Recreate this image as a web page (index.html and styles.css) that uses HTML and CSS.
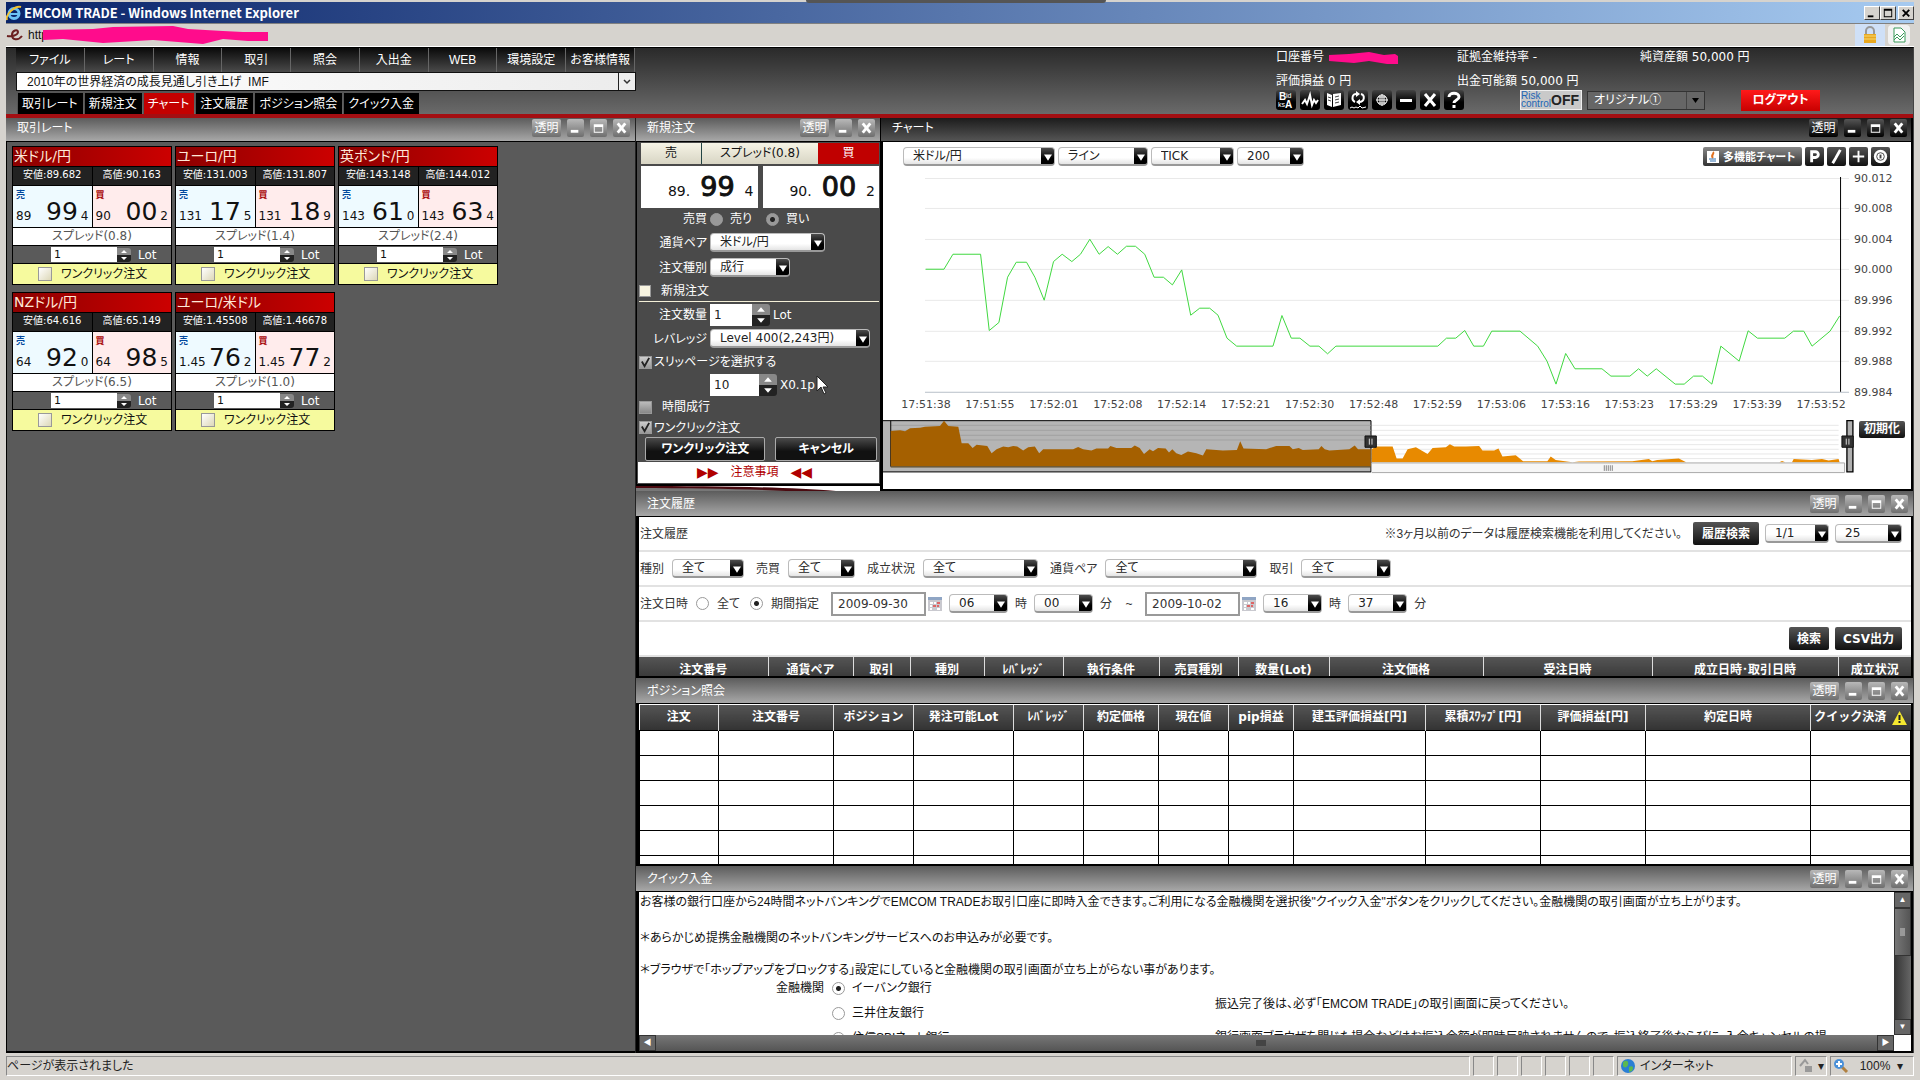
FILE: index.html
```html
<!DOCTYPE html>
<html lang="ja">
<head>
    <meta charset="UTF-8">
    <meta name="viewport" content="width=device-width, initial-scale=1.0">
    <title>EMCOM TRADE</title>
    <link rel="stylesheet" href="styles.css">
</head>
<body>

    <svg class="defs" aria-hidden="true">
        <symbol id="i-min" viewBox="0 0 18 18"><path d="M4 11h8v3H4z" fill="#fff"/></symbol>
        <symbol id="i-max" viewBox="0 0 18 18"><path d="M4 5h10v9H4zM5 8v5h8V8z" fill="#fff" fill-rule="evenodd"/></symbol>
        <symbol id="i-close" viewBox="0 0 18 18"><path d="M5 4l8 10M13 4L5 14" stroke="#fff" stroke-width="3"/></symbol>
        <symbol id="i-cal" viewBox="0 0 14 16"><path d="M0 1h14v14H0z" fill="#c9c9cf"/><path d="M0 1h14v3H0z" fill="#8fa5c4"/><path d="M2 6h3v2H2zM6 6h2v2H6zM2 9h2v2H2zM2 12h2v2H2zM9 12h3v2H9z" fill="#fff"/><path d="M9 6h3v2H9zM5 9h3v2H5zM9 9h2v2H9z" fill="#d66"/></symbol>
    </svg>

    <div class="titlebar">
        <svg class="ie" viewBox="0 0 16 16"><circle cx="8" cy="8.500" r="5" fill="none" stroke="#6cc3f5" stroke-width="3"/><path d="M4 9h9" stroke="#6cc3f5" stroke-width="2"/><path d="M1 15C-1 10 9 0 15 2" fill="none" stroke="#f2c230" stroke-width="2"/></svg>
        <span class="title-text">EMCOM TRADE - Windows Internet Explorer</span>
        <span class="shade"></span>
        <button class="xp" aria-label="最小化"><svg viewBox="0 0 15 14"><path d="M3 9h6v2H3z"/></svg></button>
        <button class="xp" aria-label="最大化"><svg viewBox="0 0 15 14"><path d="M3 2h9v9H3zM4 4v6h7V4z" fill-rule="evenodd"/></svg></button>
        <button class="xp xp-close" aria-label="閉じる"><svg viewBox="0 0 15 14"><path d="M4 3l7 7M11 3l-7 7" stroke="#000" stroke-width="2"/></svg></button>
    </div>
    <div class="address">
        <svg class="favicon" viewBox="0 0 18 16"><path d="M1 9c5 1 11-1 11-4 0-3-6-2-6 3 0 5 6 6 10 1" fill="none" stroke="#6b2020" stroke-width="2"/></svg>
        <span>http</span>
        <svg class="blob" viewBox="0 0 226 18"><path d="M0 4L50 3 70 1 130 0 145 3 180 5 200 6 225 6V15H205L180 13 160 18 110 14 60 17 20 13 0 14z" fill="#ff0c8c"/></svg>
        <span class="lock"><svg viewBox="0 0 16 18"><path d="M4 8V5a4 4 0 018 0v3" fill="none" stroke="#999" stroke-width="2"/><path d="M2 8h12v9H2z" fill="#e8a820"/><path d="M2 10h12M2 13h12" stroke="#f8d870"/></svg></span>
        <span class="cert"><svg viewBox="0 0 16 18"><path d="M3 2h7l4 4v10H3z" fill="#fff" stroke="#3a9a5a"/><path d="M3 11l3-3 3 3 4-4M3 14l3-3 3 3 4-4" fill="none" stroke="#3a9a5a"/></svg></span>
    </div>

    <div class="app">
        <header class="top">
            <div class="top-left">
                <nav class="menu">
                    <button>ファイル</button><button>レート</button><button>情報</button><button>取引</button><button>照会</button><button>入出金</button><button>WEB</button><button>環境設定</button><button>お客様情報</button>
                </nav>
                <select class="news" aria-label="ニュース"><option>2010年の世界経済の成長見通し引き上げ&nbsp; IMF</option></select>
                <nav class="tabs">
                    <button>取引レート</button><button>新規注文</button><button class="active">チャート</button><button>注文履歴</button><button>ポジション照会</button><button>クイック入金</button>
                </nav>
            </div>
            <div class="top-right">
                <div class="account">
                    <span>口座番号 <svg class="mask" viewBox="0 0 70 14"><path d="M0 5L20 4 40 2 55 5 66 4 69 6V14H58L40 11 25 13 0 11z" fill="#ff0c8c"/></svg></span>
                    <span>証拠金維持率 -</span>
                    <span>純資産額 50,000 円</span>
                    <span>評価損益 0 円</span>
                    <span>出金可能額 50,000 円</span>
                </div>
                <div class="tools">
                    <div class="icons">
                        <button aria-label="Bid Ask"><svg viewBox="0 0 20 20"><text x="3" y="10" class="t9">B</text><text x="10" y="8" class="t5">id</text><text x="2" y="17" class="t5">ks</text><text x="9" y="18" class="t9">A</text></svg></button>
                        <button aria-label="チャート"><svg viewBox="0 0 20 20"><path d="M2 14l3-4 2 4 3-9 2 10 2-5 2 3 2-3" class="ln2"/></svg></button>
                        <button aria-label="ニュース"><svg viewBox="0 0 20 20"><path d="M3 3l5 2v12l-5-2zM9 4l8-1v12l-8 2z" fill="#fff"/><path d="M4 7l3 1M4 10l3 1M11 7l4-1M11 10l4-1M11 13l4-1" stroke="#444"/></svg></button>
                        <button aria-label="更新"><svg viewBox="0 0 20 20"><path d="M9 4C4 3 3 10 7 12M11 12c6 0 6-7 2-8" class="ln2"/><path d="M8 1l4 3-4 3zM12 9l-4 3 4 3z" fill="#fff"/><path d="M2 18l2-1 2 1 2-1 2 1 2-2 2 2 4-1" class="ln"/></svg></button>
                        <button aria-label="世界"><svg viewBox="0 0 20 20"><circle cx="10" cy="10" r="5" class="ln"/><path d="M4 10h12M10 4v12M6 7h8M6 13h8M8 6v8M12 6v8" class="ln"/></svg></button>
                        <button aria-label="最小化"><svg viewBox="0 0 20 20"><path d="M4 9h12v3H4z" fill="#fff"/></svg></button>
                        <button aria-label="閉じる"><svg viewBox="0 0 20 20"><path d="M5 4l10 12M15 4L5 16" stroke="#fff" stroke-width="3"/></svg></button>
                        <button aria-label="ヘルプ"><svg viewBox="0 0 20 20"><path d="M5 7c0-5 10-5 10 0 0 3-5 3-5 6M10 15v3" fill="none" stroke="#fff" stroke-width="3"/></svg></button>
                    </div>
                    <button class="risk"><span>Risk<br>control</span><b>OFF</b></button>
                    <select class="layout-sel" aria-label="レイアウト"><option>オリジナル①</option></select>
                    <button class="logout">ログアウト</button>
                </div>
            </div>
        </header>

        <main class="work">
            <section class="panel rates">
                <div class="bar"><h2>取引レート</h2><button class="clear">透明</button><button aria-label="最小化"><svg><use href="#i-min"/></svg></button><button aria-label="最大化"><svg><use href="#i-max"/></svg></button><button aria-label="閉じる"><svg><use href="#i-close"/></svg></button></div>
                <div class="cards">
                    <article class="card">
                        <h3>米ドル/円</h3>
                        <div class="pair hl"><span>安値:89.682</span><span>高値:90.163</span></div>
                        <div class="pair px"><button class="sell"><i>売</i><span>89</span><b>99</b><span>4</span></button><button class="buy"><i>買</i><span>90</span><b>00</b><span>2</span></button></div>
                        <div class="spread">スプレッド(0.8)</div>
                        <div class="lot"><input type="text" value="1" id="lot1"><span class="spin"></span><label for="lot1">Lot</label></div>
                        <label class="one"><input type="checkbox">ワンクリック注文</label>
                    </article>
                    <article class="card">
                        <h3>ユーロ/円</h3>
                        <div class="pair hl"><span>安値:131.003</span><span>高値:131.807</span></div>
                        <div class="pair px"><button class="sell"><i>売</i><span>131</span><b>17</b><span>5</span></button><button class="buy"><i>買</i><span>131</span><b>18</b><span>9</span></button></div>
                        <div class="spread">スプレッド(1.4)</div>
                        <div class="lot"><input type="text" value="1" id="lot2"><span class="spin"></span><label for="lot2">Lot</label></div>
                        <label class="one"><input type="checkbox">ワンクリック注文</label>
                    </article>
                    <article class="card">
                        <h3>英ポンド/円</h3>
                        <div class="pair hl"><span>安値:143.148</span><span>高値:144.012</span></div>
                        <div class="pair px"><button class="sell"><i>売</i><span>143</span><b>61</b><span>0</span></button><button class="buy"><i>買</i><span>143</span><b>63</b><span>4</span></button></div>
                        <div class="spread">スプレッド(2.4)</div>
                        <div class="lot"><input type="text" value="1" id="lot3"><span class="spin"></span><label for="lot3">Lot</label></div>
                        <label class="one"><input type="checkbox">ワンクリック注文</label>
                    </article>
                    <article class="card">
                        <h3>NZドル/円</h3>
                        <div class="pair hl"><span>安値:64.616</span><span>高値:65.149</span></div>
                        <div class="pair px"><button class="sell"><i>売</i><span>64</span><b>92</b><span>0</span></button><button class="buy"><i>買</i><span>64</span><b>98</b><span>5</span></button></div>
                        <div class="spread">スプレッド(6.5)</div>
                        <div class="lot"><input type="text" value="1" id="lot4"><span class="spin"></span><label for="lot4">Lot</label></div>
                        <label class="one"><input type="checkbox">ワンクリック注文</label>
                    </article>
                    <article class="card">
                        <h3>ユーロ/米ドル</h3>
                        <div class="pair hl"><span>安値:1.45508</span><span>高値:1.46678</span></div>
                        <div class="pair px"><button class="sell"><i>売</i><span>1.45</span><b>76</b><span>2</span></button><button class="buy"><i>買</i><span>1.45</span><b>77</b><span>2</span></button></div>
                        <div class="spread">スプレッド(1.0)</div>
                        <div class="lot"><input type="text" value="1" id="lot5"><span class="spin"></span><label for="lot5">Lot</label></div>
                        <label class="one"><input type="checkbox">ワンクリック注文</label>
                    </article>
                </div>
            </section>

            <div class="right">
                <div class="upper">
                    <section class="panel order">
                        <div class="bar"><h2>新規注文</h2><button class="clear">透明</button><button aria-label="最小化"><svg><use href="#i-min"/></svg></button><button aria-label="閉じる"><svg><use href="#i-close"/></svg></button></div>
                        <form class="order-body">
                            <div class="side"><span class="s1">売</span><span class="s2">スプレッド(0.8)</span><span class="s3">買</span></div>
                            <div class="big"><div><span>89.</span><b>99</b><span>4</span></div><div><span>90.</span><b>00</b><span>2</span></div></div>
                            <div class="row r-radio"><span class="lab">売買</span><label><input type="radio" name="bs">売り</label><label><input type="radio" name="bs" checked>買い</label></div>
                            <div class="row r-sel"><label class="lab" for="pair">通貨ペア</label><select id="pair" class="sel w113"><option>米ドル/円</option></select></div>
                            <div class="row r-sel"><label class="lab" for="type">注文種別</label><select id="type" class="sel w80"><option>成行</option></select></div>
                            <label class="row r-new"><input type="checkbox">新規注文</label>
                            <div class="row r-num"><label class="lab" for="qty">注文数量</label><input type="text" id="qty" class="n1" value="1"><span class="spin big-spin"></span><span>Lot</span></div>
                            <div class="row r-sel"><label class="lab" for="lev">レバレッジ</label><select id="lev" class="sel w160"><option>Level 400(2,243円)</option></select></div>
                            <label class="row r-chk"><input type="checkbox" checked>スリッページを選択する</label>
                            <div class="row r-num"><span class="lab"></span><input type="text" class="n2" value="10" aria-label="スリッページ"><span class="spin big-spin"></span><span>X0.1p</span></div>
                            <label class="row r-chk wide"><input type="checkbox">時間成行</label>
                            <label class="row r-chk low"><input type="checkbox" checked>ワンクリック注文</label>
                            <div class="acts"><button type="button" class="a1">ワンクリック注文</button><button type="button" class="a2">キャンセル</button></div>
                            <a class="notice" href="#"><span>▶▶</span>注意事項<span>◀◀</span></a>
                            <svg class="cursor" viewBox="0 0 12 20"><path d="M1 1v15l4-4 3 7 2-1-3-6h5z" fill="#fff" stroke="#222"/></svg>
                        </form>
                        <svg class="swoosh" viewBox="0 0 244 5" preserveAspectRatio="none"><path d="M0 0C80 0 150 1 200 5H0z" fill="#4a0a10"/><path d="M0 2C60 2 110 3 150 5H0z" fill="#777"/></svg>
                    </section>

                    <section class="panel chart">
                        <div class="bar dark"><h2>チャート</h2><button class="clear">透明</button><button aria-label="最小化"><svg><use href="#i-min"/></svg></button><button aria-label="最大化"><svg><use href="#i-max"/></svg></button><button aria-label="閉じる"><svg><use href="#i-close"/></svg></button></div>
                        <div class="chart-body">
                            <div class="chart-tools">
                                <select class="sel w152" aria-label="通貨ペア"><option>米ドル/円</option></select>
                                <select class="sel w89" aria-label="種類"><option>ライン</option></select>
                                <select class="sel w84" aria-label="足"><option>TICK</option></select>
                                <select class="sel w67" aria-label="本数"><option>200</option></select>
                                <button class="multi"><svg viewBox="0 0 12 12"><path d="M0 0h12v12H0z" fill="#fff"/><path d="M6 1c2 2-3 3 0 6" fill="none" stroke="#e07020" stroke-width="2"/><path d="M2 8h7M3 10h6" stroke="#3070b0"/></svg>多機能チャート</button>
                                <button class="ct" aria-label="P"><svg viewBox="0 0 20 20"><path d="M7 16V5h4a3 3 0 010 6H7" fill="none" stroke="#fff" stroke-width="3"/></svg></button>
                                <button class="ct" aria-label="線"><svg viewBox="0 0 20 20"><path d="M14 3L9 12l-3 5" fill="none" stroke="#fff" stroke-width="3"/></svg></button>
                                <button class="ct" aria-label="拡大"><svg viewBox="0 0 20 20"><path d="M10 4v12M4 10h12" stroke="#fff" stroke-width="2"/></svg></button>
                                <button class="ct" aria-label="設定"><svg viewBox="0 0 20 20"><circle cx="10" cy="10" r="7" fill="#fff"/><circle cx="10" cy="10" r="4" fill="none" stroke="#444"/><path d="M10 8v4" stroke="#444" stroke-width="2"/></svg></button>
                            </div>
                            <svg class="plot" viewBox="883 168 1029 246">
                                <path class="grid" d="M925 178.500h925M925 208.500h925M925 239.500h925M925 269.500h925M925 300.500h925M925 331.500h925M925 361.500h925"/>
                                <path d="M925 392.500h925" stroke="#b8bfc8"/>
                                <path d="M1841.500 177V392" stroke="#000"/>
                                <svg x="883" y="168" width="1029" height="246" viewBox="9 174 3087 738">
                                    <polyline class="tick" points="137,478 192,478 219,433 302,433 328,662 357,638 383,502 409,457 440,457 465,502 493,571 521,455 547,433 576,455 602,433 630,388 658,433 685,410 713,433 740,409 767,409 795,433 823,502 851,502 878,525 906,480 933,616 960,595 990,595 1015,616 1042,685 1071,709 1180,709 1207,617 1235,685 1261,685 1291,709 1318,709 1344,732 1369,709 1675,709 1701,685 1729,685 1756,662 1783,709 1812,709 1837,664 1922,664 1975,709 2003,754 2030,823 2059,731 2087,777 2168,777 2195,799 2252,799 2278,777 2304,799 2331,777 2388,823 2415,823 2443,799 2470,799 2498,823 2525,709 2580,754 2607,663 2635,685 2717,685 2743,664 2774,664 2799,709 2853,664 2882,618"/>
                                </svg>
                                <g class="axis">
                                    <text x="1855" y="182">90.012</text><text x="1855" y="212">90.008</text><text x="1855" y="243">90.004</text><text x="1855" y="273">90.000</text><text x="1855" y="304">89.996</text><text x="1855" y="335">89.992</text><text x="1855" y="365">89.988</text><text x="1855" y="396">89.984</text>
                                </g>
                                <g class="axis mid">
                                    <text x="926" y="408">17:51:38</text><text x="990" y="408">17:51:55</text><text x="1054" y="408">17:52:01</text><text x="1118" y="408">17:52:08</text><text x="1182" y="408">17:52:14</text><text x="1246" y="408">17:52:21</text><text x="1310" y="408">17:52:30</text><text x="1374" y="408">17:52:48</text><text x="1438" y="408">17:52:59</text><text x="1502" y="408">17:53:06</text><text x="1566" y="408">17:53:16</text><text x="1630" y="408">17:53:23</text><text x="1694" y="408">17:53:29</text><text x="1758" y="408">17:53:39</text><text x="1822" y="408">17:53:52</text>
                                </g>
                            </svg>
                            <div class="range">
                                <svg class="range-svg" viewBox="9 924 2920 180">
                                    <path d="M1476 946H2880M1476 961H2880M1476 976H2880M1476 990H2880M1476 1004H2880M1476 1018H2880M1476 1032H2880M1476 1046H2880" stroke="#e8e8e8" stroke-width="3"/>
                                    <path d="M3 932H1475V1086H3z" fill="#b5b5b5" stroke="#000" stroke-width="3"/>
                                    <path d="M32 946H1474M32 961H1474M32 976H1474M32 990H1474" stroke="#a2a2a2" stroke-width="3"/>
                                    <path d="M32 932V1070" stroke="#000" stroke-width="3"/>
                                    <path fill="#a56000" d="M32 1070V963L60 961 75 964 90 955 120 953 135 950 180 948 192 932 205 948 235 950 245 1000 265 1000 278 1014 290 1004 322 1008 335 1030 350 1018 370 1010 385 1012 400 1008 412 1010 430 1022 445 1012 465 1010 478 1030 490 1018 580 1018 595 1011 610 1018 635 1022 650 1016 685 1016 692 1008 710 1014 755 1014 765 1007 780 1014 793 1032 810 1018 820 1024 835 1014 858 1016 868 1028 878 1018 890 1030 905 1035 925 1025 950 1030 970 1037 980 1018 1030 1022 1072 1020 1082 994 1092 1016 1160 1018 1190 1008 1230 1008 1240 1018 1258 1014 1270 1020 1318 1018 1326 1008 1336 1018 1350 1022 1410 1018 1426 1007 1436 1018 1474 1018V1070z"/>
                                    <path d="M32 1071H1474" stroke="#5c4a28" stroke-width="4"/>
                                    <path fill="#e88a00" d="M1477 1057V1018L1490 1010 1540 1010 1552 1046 1570 1046 1585 1018 1610 1012 1645 1032 1660 1014 1700 1012 1712 1003 1725 1010 1760 1010 1800 1008 1810 1022 1845 1022 1858 1016 1870 1040 1910 1036 1932 1054 2005 1054 2015 1040 2030 1050 2080 1057 2100 1055 2260 1054 2310 1047 2320 1054 2335 1050 2400 1046 2422 1057 2702 1057 2710 1053 2720 1057 2740 1057 2745 1047 2800 1050 2830 1047 2850 1052 2880 1047 2883 1057z"/>
                                    <path d="M1477 1059H2898V1088H1477" fill="#f6f6f6" stroke="#aaa" stroke-width="3"/>
                                    <path d="M2176 1066v17M2182 1066v17M2188 1066v17M2194 1066v17M2200 1066v17" stroke="#888" stroke-width="3"/>
                                    <path d="M2905 932h18v154h-18z" fill="#b0b0b0" stroke="#000" stroke-width="4"/>
                                    <path d="M1457 978h34v34h-34zM2890 978h34v34h-34z" fill="#333" stroke="#111" stroke-width="3"/>
                                    <path d="M1470 986v18M1478 986v18M2903 986v18M2911 986v18" stroke="#ddd" stroke-width="3"/>
                                </svg>
                                <button class="reset">初期化</button>
                            </div>
                        </div>
                    </section>
                </div>

                <section class="panel history">
                    <div class="bar"><h2>注文履歴</h2><button class="clear">透明</button><button aria-label="最小化"><svg><use href="#i-min"/></svg></button><button aria-label="最大化"><svg><use href="#i-max"/></svg></button><button aria-label="閉じる"><svg><use href="#i-close"/></svg></button></div>
                    <div class="box hist-body">
                        <div class="line l1"><span>注文履歴</span><span class="push note">※3ヶ月以前のデータは履歴検索機能を利用してください。</span><button class="btn">履歴検索</button><select class="sel w64" aria-label="ページ"><option>1/1</option></select><select class="sel w67" aria-label="件数"><option>25</option></select></div>
                        <div class="line l2">
                            <label class="f"><span>種別</span><select class="sel w72"><option>全て</option></select></label>
                            <label class="f"><span>売買</span><select class="sel w67"><option>全て</option></select></label>
                            <label class="f"><span>成立状況</span><select class="sel w113"><option>全て</option></select></label>
                            <label class="f"><span>通貨ペア</span><select class="sel w152"><option>全て</option></select></label>
                            <label class="f"><span>取引</span><select class="sel w89"><option>全て</option></select></label>
                        </div>
                        <div class="line l3">
                            <span>注文日時</span><label><input type="radio" name="term">全て</label><label><input type="radio" name="term" checked>期間指定</label>
                            <input type="text" class="date" value="2009-09-30" aria-label="開始日"><svg class="cal"><use href="#i-cal"/></svg>
                            <select class="sel w59" aria-label="開始時"><option>06</option></select><span>時</span><select class="sel w59" aria-label="開始分"><option>00</option></select><span>分</span><span class="tilde">~</span>
                            <input type="text" class="date" value="2009-10-02" aria-label="終了日"><svg class="cal"><use href="#i-cal"/></svg>
                            <select class="sel w59" aria-label="終了時"><option>16</option></select><span>時</span><select class="sel w59" aria-label="終了分"><option>37</option></select><span>分</span>
                        </div>
                        <div class="line l4"><button class="btn push">検索</button><button class="btn">CSV出力</button></div>
                        <table class="tbl t-hist">
                            <colgroup><col><col><col><col><col><col><col><col><col><col><col><col></colgroup>
                            <tr><th>注文番号</th><th>通貨ペア</th><th>取引</th><th>種別</th><th>ﾚﾊﾞﾚｯｼﾞ</th><th>執行条件</th><th>売買種別</th><th>数量(Lot)</th><th>注文価格</th><th>受注日時</th><th>成立日時･取引日時</th><th>成立状況</th></tr>
                        </table>
                    </div>
                </section>

                <section class="panel position">
                    <div class="bar"><h2>ポジション照会</h2><button class="clear">透明</button><button aria-label="最小化"><svg><use href="#i-min"/></svg></button><button aria-label="最大化"><svg><use href="#i-max"/></svg></button><button aria-label="閉じる"><svg><use href="#i-close"/></svg></button></div>
                    <div class="box pos-body">
                        <table class="tbl t-pos">
                            <colgroup><col><col><col><col><col><col><col><col><col><col><col><col><col></colgroup>
                            <tr><th>注文</th><th>注文番号</th><th>ポジション</th><th>発注可能Lot</th><th>ﾚﾊﾞﾚｯｼﾞ</th><th>約定価格</th><th>現在値</th><th>pip損益</th><th>建玉評価損益[円]</th><th>累積ｽﾜｯﾌﾟ[円]</th><th>評価損益[円]</th><th>約定日時</th><th>クイック決済<svg class="warn" viewBox="0 0 15 14"><path d="M7.500 0L15 14H0z" fill="#f5e830"/><path d="M7.500 4v5M7.500 10v2" stroke="#222" stroke-width="2"/></svg></th></tr>
                            <tr><td></td><td></td><td></td><td></td><td></td><td></td><td></td><td></td><td></td><td></td><td></td><td></td><td></td></tr>
                            <tr><td></td><td></td><td></td><td></td><td></td><td></td><td></td><td></td><td></td><td></td><td></td><td></td><td></td></tr>
                            <tr><td></td><td></td><td></td><td></td><td></td><td></td><td></td><td></td><td></td><td></td><td></td><td></td><td></td></tr>
                            <tr><td></td><td></td><td></td><td></td><td></td><td></td><td></td><td></td><td></td><td></td><td></td><td></td><td></td></tr>
                            <tr><td></td><td></td><td></td><td></td><td></td><td></td><td></td><td></td><td></td><td></td><td></td><td></td><td></td></tr>
                            <tr><td></td><td></td><td></td><td></td><td></td><td></td><td></td><td></td><td></td><td></td><td></td><td></td><td></td></tr>
                        </table>
                    </div>
                </section>

                <section class="panel deposit">
                    <div class="bar"><h2>クイック入金</h2><button class="clear">透明</button><button aria-label="最小化"><svg><use href="#i-min"/></svg></button><button aria-label="最大化"><svg><use href="#i-max"/></svg></button><button aria-label="閉じる"><svg><use href="#i-close"/></svg></button></div>
                    <div class="box dep-body">
                        <div class="dep-text">
                            <p>お客様の銀行口座から24時間ネットバンキングでEMCOM TRADEお取引口座に即時入金できます。ご利用になる金融機関を選択後"クイック入金"ボタンをクリックしてください。金融機関の取引画面が立ち上がります。</p>
                            <p class="p2">＊あらかじめ提携金融機関のネットバンキングサービスへのお申込みが必要です。</p>
                            <p class="p3">＊ブラウザで｢ホップアップをブロックする｣設定にしていると金融機関の取引画面が立ち上がらない事があります。</p>
                            <div class="banks">
                                <span class="bank-lab">金融機関</span>
                                <div class="bank-list">
                                    <label><input type="radio" name="bank" checked>イーバンク銀行</label>
                                    <label><input type="radio" name="bank">三井住友銀行</label>
                                    <label><input type="radio" name="bank">住信SBIネット銀行</label>
                                </div>
                                <div class="bank-note">
                                    <p>振込完了後は、必ず｢EMCOM TRADE｣の取引画面に戻ってください。</p>
                                    <p>銀行画面ブラウザを閉じた場合などはお振込金額が即時反映されませんので、振込終了後ならびに、入金キャンセルの場</p>
                                </div>
                            </div>
                        </div>
                        <div class="vs"><span class="sb">▲</span><span class="thumb"></span><span class="sb end">▼</span></div>
                        <div class="hs"><span class="sb">◀</span><span class="grip"></span><span class="sb end">▶</span></div>
                        <div class="corner"></div>
                    </div>
                </section>
            </div>
        </main>
    </div>

    <footer class="status">
        <span class="msg">ページが表示されました</span>
        <span class="c"></span><span class="c"></span><span class="c"></span><span class="c"></span><span class="c"></span><span class="c"></span>
        <span class="zone"><svg viewBox="0 0 16 16"><circle cx="8" cy="8" r="7" fill="#2a7fd4"/><path d="M3 4c4-3 6 0 5 3s-4 3-5 1zM9 9c4-2 5 1 3 4l-3 1z" fill="#5cb850"/></svg>インターネット</span>
        <span class="prot"><svg viewBox="0 0 16 16"><path d="M2 8l5-6 3 4" fill="none" stroke="#999" stroke-width="2"/><path d="M7 8h7v6H7z" fill="#999"/></svg>▾</span>
        <span class="zoom"><svg viewBox="0 0 16 16"><path d="M9 9l5 5" stroke="#b08040" stroke-width="3"/><circle cx="6" cy="6" r="5" fill="#4a90d8"/><path d="M6 3v6M3 6h6" stroke="#fff" stroke-width="2"/></svg>100%<i>▾</i></span>
    </footer>
    <div class="dock"></div>

</body>
</html>
```

FILE: styles.css
```css
* {
    box-sizing: border-box;
}
body {
    margin: 0;
    height: 100vh;
    display: flex;
    flex-direction: column;
    padding: 2px 6px 4px;
    background: #d6d3ce;
    font-family: "Liberation Sans", "Noto Sans CJK JP", sans-serif;
    /* proportional kana */
    font-feature-settings: "palt";
    font-size: 12px;
    line-height: 16px;
    color: #111;
    overflow: hidden;
    position: relative;
}
h2, h3, p {
    margin: 0;
    font-weight: normal;
}
button, input, select {
    font: inherit;
    font-feature-settings: inherit;
    color: inherit;
    margin: 0;
    padding: 0;
    border: none;
    border-radius: 0;
    outline: none;
}
select {
    appearance: none;
}
button {
    white-space: nowrap;
}
svg {
    display: block;
    flex: none;
}
.defs {
    position: absolute;
    width: 0;
    height: 0;
}
.dock {
    position: absolute;
    top: 0;
    left: 42%;
    width: 300px;
    height: 3px;
    border-radius: 0 0 4px 4px;
    background: #555;
}

/* browser window */
.titlebar {
    height: 21px;
    display: flex;
    align-items: center;
    background: linear-gradient(90deg, #0a246a, #a6caf0);
    color: #fff;
    font-weight: bold;
}
.ie {
    width: 16px;
    height: 16px;
    margin-right: 2px;
}
.title-text {
    font-family: "Noto Sans CJK JP", sans-serif;
    font-size: 13px;
}
.shade {
    flex: 1;
}
.xp {
    width: 16px;
    height: 14px;
    background: #d6d3ce;
    border: 1px solid;
    border-color: #fff #404040 #404040 #fff;
}
.xp-close {
    margin: 0 0 0 2px;
}
.address {
    height: 24px;
    display: flex;
    align-items: center;
    border-top: 1px solid #808080;
    border-bottom: 1px solid #fff;
    position: relative;
}
.favicon {
    width: 18px;
    height: 16px;
    margin: 0 4px 0 0;
}
.blob {
    position: absolute;
    left: 37px;
    top: 2px;
    width: 226px;
    height: 18px;
}
.lock {
    margin-left: auto;
    width: 30px;
    height: 22px;
    padding: 2px 7px;
    background: #cfe0f7;
}
.cert {
    width: 22px;
    height: 20px;
    margin: 0 4px 0 3px;
    padding: 1px 3px;
    background: #f2f2f2;
    border-radius: 4px;
}

/* application */
.app {
    flex: 1;
    min-height: 0;
    display: flex;
    flex-direction: column;
    background: #5a5a5a;
    border-top: 1px solid #000;
    border-right: 1px solid #444;
}
.top {
    flex: none;
    height: 70px;
    display: flex;
    justify-content: space-between;
    background: linear-gradient(#2a2a2a, #6a6a6a);
    border-bottom: 4px solid #a30e12;
    color: #fff;
}
.top-left {
    width: 630px;
    padding-left: 10px;
}
.menu {
    display: flex;
    height: 24px;
    padding-right: 1px;
}
.menu button {
    flex: 1;
    background: linear-gradient(#0a0a0a, #4a4a4a);
    border-right: 1px solid #666;
}
.news {
    display: block;
    width: 620px;
    height: 19px;
    padding: 0 10px;
    border: 1px solid #111;
    color: #111;
    background: url("data:image/svg+xml,%3Csvg xmlns='http://www.w3.org/2000/svg' viewBox='0 0 17 17'%3E%3Cpath d='M0 0h17v17H0z' fill='%23eee'/%3E%3Cpath d='M.5 0v17' stroke='%23222'/%3E%3Cpath d='M6 7l3 3 3-3' fill='none' stroke='%23333' stroke-width='1.500'/%3E%3C/svg%3E") right / 17px 17px no-repeat, linear-gradient(90deg, #fff, #ececec);
}
.tabs {
    display: flex;
    gap: 1px;
    height: 23px;
    padding: 2px 0 0 1px;
}
.tabs button {
    padding: 0 5px 0 4px;
    background: #000;
    border-left: 1px solid #555;
}
.tabs .active {
    background: #c40000;
}
.top-right {
    width: 637px;
}
.account {
    display: grid;
    grid-template-columns: 181px 183px 1fr;
    row-gap: 8px;
    padding-top: 1px;
    height: 41px;
    font-family: "DejaVu Sans", "Noto Sans CJK JP", sans-serif;
    position: relative;
}
.mask {
    position: absolute;
    left: 53px;
    top: 2px;
    width: 70px;
    height: 14px;
}
.tools {
    display: flex;
    align-items: center;
    height: 22px;
}
.icons {
    display: flex;
    gap: 4px;
}
.icons button {
    width: 20px;
    height: 20px;
    border-radius: 3px;
    background: linear-gradient(#444, #000 60%);
}
.icons svg {
    width: 20px;
    height: 20px;
}
.ln {
    fill: none;
    stroke: #fff;
}
.ln2 {
    fill: none;
    stroke: #fff;
    stroke-width: 2;
}
.t9 {
    font: bold 10px "Liberation Sans", sans-serif;
    fill: #fff;
}
.t5 {
    font: 7px "Liberation Sans", sans-serif;
    fill: #fff;
}
.risk {
    display: flex;
    align-items: center;
    width: 62px;
    height: 20px;
    margin-left: 56px;
    background: #c9c9c9;
    border: 1px solid #eee;
    color: #1c66b5;
    font-size: 10px;
    line-height: 8px;
    text-align: left;
}
.risk b {
    color: #222;
    font-size: 14px;
}
.layout-sel {
    width: 118px;
    height: 19px;
    margin-left: 5px;
    padding-left: 6px;
    border: 1px solid #333;
    color: #fff;
    background: url("data:image/svg+xml,%3Csvg xmlns='http://www.w3.org/2000/svg' viewBox='0 0 18 17'%3E%3Cpath d='M.5 0v17' stroke='%23444'/%3E%3Cpath d='M6 6h7l-3.500 5z'/%3E%3C/svg%3E") right / 18px 17px no-repeat, #666;
}
.logout {
    width: 79px;
    height: 21px;
    margin-left: 36px;
    background: linear-gradient(#ff1a1a, #c80000);
    font-weight: bold;
}
.work {
    flex: 1;
    min-height: 0;
    display: grid;
    grid-template-columns: 630fr 1277fr;
    grid-template-rows: minmax(0, 1fr);
}
.right {
    display: flex;
    flex-direction: column;
    min-width: 0;
    background: #000;
}
.upper {
    flex: none;
    display: grid;
    grid-template-columns: 245fr 1032fr;
    height: 373px;
}
.panel {
    display: flex;
    flex-direction: column;
    min-width: 0;
}
.bar {
    flex: none;
    display: flex;
    align-items: center;
    gap: 6px;
    height: 24px;
    padding: 0 5px 3px 11px;
    border-bottom: 1px solid #000;
    background: linear-gradient(#5c5c5c, #a8a8a8);
    color: #fff;
}
.right > .panel .bar {
    height: 26px;
    padding-bottom: 0;
}
.bar.dark {
    background: linear-gradient(#1c1c1c, #555);
}
.bar h2 {
    flex: 1;
    font-size: 12px;
}
.bar button {
    width: 17px;
    height: 18px;
    border-radius: 2px;
    background: linear-gradient(#b8b8b8, #6e6e6e);
}
.bar.dark button {
    background: linear-gradient(#555, #000);
}
.bar svg {
    width: 17px;
    height: 18px;
}
.bar .clear {
    width: 29px;
}

/* rates */
.rates {
    border-right: 1px solid #222;
}
.cards {
    flex: 1;
    display: flex;
    flex-wrap: wrap;
    align-content: flex-start;
    gap: 7px 3px;
    padding: 4px 0 0 5px;
    border-left: 1px solid #000;
    border-bottom: 2px solid #000;
    background: #5a5a5a;
    font-family: "DejaVu Sans", "Noto Sans CJK JP", sans-serif;
}
.card {
    width: 160px;
    padding: 1px;
    background: #000;
    display: flex;
    flex-direction: column;
    gap: 1px;
}
.card h3 {
    height: 19px;
    line-height: 19px;
    padding-left: 1px;
    background: linear-gradient(90deg, #8c0000, #cc0000);
    color: #ffe8d8;
    font-size: 14px;
}
.pair {
    display: grid;
    grid-template-columns: repeat(2, minmax(0, 1fr));
    grid-template-rows: minmax(0, 1fr);
    gap: 1px;
}
.hl {
    height: 18px;
    line-height: 16px;
    color: #fff;
    text-align: center;
    font-size: 10px;
}
.hl span {
    background: #222;
}
.px {
    height: 41px;
}
.px button {
    display: flex;
    align-items: baseline;
    gap: 3px;
    padding: 12px 3px 0;
    color: #111;
    line-height: 16px;
    position: relative;
}
.px b {
    margin-left: auto;
    font-size: 25px;
    line-height: 28px;
    font-weight: normal;
}
.px i {
    position: absolute;
    left: 3px;
    top: 3px;
    line-height: 12px;
    font-size: 9px;
    font-style: normal;
    font-weight: bold;
}
.sell {
    background: #eefaff;
}
.buy {
    background: #ffecec;
}
.sell i {
    color: #00479c;
}
.buy i {
    color: #a60000;
}
.spread {
    height: 17px;
    line-height: 16px;
    background: #fff;
    color: #555;
    text-align: center;
}
.lot {
    height: 17px;
    display: flex;
    align-items: center;
    padding-left: 38px;
    background: #5a5a5a;
    color: #fff;
}
.lot input {
    width: 66px;
    height: 15px;
    padding-left: 3px;
    background: #fff;
    color: #111;
    font-size: 11px;
}
.lot label {
    margin-left: 7px;
}
.spin {
    width: 14px;
    height: 14px;
    border-radius: 0 3px 3px 0;
    background: url("data:image/svg+xml,%3Csvg xmlns='http://www.w3.org/2000/svg' viewBox='0 0 14 14' preserveAspectRatio='none'%3E%3Cpath d='M0 0h14v7H0z' fill='%23888'/%3E%3Cpath d='M0 7h14v7H0z' fill='%23222'/%3E%3Cpath d='M4 5l3-3 3 3zM4 9l3 3 3-3z' fill='%23fff'/%3E%3C/svg%3E") center / 100% 100%;
}
.big-spin {
    width: 18px;
    height: 22px;
    margin-right: 3px;
}
.one {
    height: 20px;
    display: flex;
    align-items: center;
    gap: 9px;
    padding-left: 25px;
    background: #f6fa9e;
}
input[type=checkbox] {
    appearance: none;
    width: 14px;
    height: 14px;
    background: linear-gradient(135deg, #fff, #ddd8b8);
    border: 1px solid #999;
}

/* order entry */
.order-body {
    height: 344px;
    padding: 1px 1px 0 2px;
    background: #4a4a4a;
    color: #fff;
    font-family: "DejaVu Sans", "Noto Sans CJK JP", sans-serif;
    position: relative;
    border-left: 1px solid #000;
    border-bottom: 2px solid #000;
}
.order {
    background: #fff;
    border-right: 1px solid #000;
}
.swoosh {
    width: 100%;
    height: 5px;
}
.side {
    display: grid;
    grid-template-columns: 61px 1fr 61px;
    height: 21px;
    margin-left: 2px;
    line-height: 20px;
    text-align: center;
    background: linear-gradient(#f6f4e6, #d8d5c4);
    color: #111;
}
.s1 {
    border-right: 1px solid #244;
}
.s3 {
    background: #c00000;
    color: #fff;
}
.big {
    display: grid;
    grid-template-columns: 1fr 1fr;
    gap: 5px;
    height: 39px;
    margin: 2px 0 3px 2px;
}
.big div {
    display: flex;
    align-items: baseline;
    justify-content: flex-end;
    gap: 10px;
    padding: 4px 4px 0 0;
    background: #fff;
    color: #111;
    font-size: 14px;
    line-height: 34px;
}
.big b {
    font-size: 27px;
    font-weight: normal;
    -webkit-text-stroke: 1px #111;
}
.row {
    display: flex;
    align-items: center;
    position: relative;
}
.lab {
    width: 68px;
    margin-right: 3px;
    text-align: right;
}
.r-radio {
    height: 22px;
}
.r-radio label {
    display: flex;
    align-items: center;
    gap: 7px;
    margin-right: 14px;
}
input[type=radio] {
    appearance: none;
    width: 13px;
    height: 13px;
    border-radius: 50%;
    border: 1px solid #999;
    background: #fff;
}
input[type=radio]:checked {
    background: radial-gradient(#222 0 2px, #fff 3px);
}
.order input[type=radio] {
    background: #999;
}
.order input[type=radio]:checked {
    background: radial-gradient(#222 0 2px, #999 3px);
}
.r-sel {
    height: 25px;
}
.r-new {
    height: 22px;
    gap: 10px;
    border-bottom: 1px solid #f4f0d8;
    margin-bottom: 1px;
}
.r-new input[type=checkbox] {
    width: 12px;
    height: 12px;
    background: #f8f4e0;
}
.r-num {
    height: 23px;
}
.r-num input {
    height: 22px;
    padding-left: 4px;
    background: #fff;
    color: #222;
}
.n1 {
    width: 42px;
}
.n2 {
    width: 49px;
}
.r-chk {
    height: 22px;
    gap: 2px;
}
.r-chk.wide {
    gap: 10px;
}
.r-chk.low {
    height: 19px;
}
.order .r-chk input {
    width: 13px;
    height: 13px;
    background: linear-gradient(#bbb, #888);
}
.order .r-chk input:checked {
    background: url("data:image/svg+xml,%3Csvg xmlns='http://www.w3.org/2000/svg' viewBox='0 0 12 12'%3E%3Cpath d='M2 5l3 5 5-9' fill='none' stroke='%23222' stroke-width='2'/%3E%3C/svg%3E"), linear-gradient(#ccc, #999);
}
.acts {
    display: flex;
    gap: 10px;
    padding: 0 2px 0 6px;
}
.acts button {
    height: 24px;
    border: 1px solid #aaa;
    border-radius: 2px;
    background: linear-gradient(#4a4a4a, #111 60%);
    font-weight: bold;
}
.a1 {
    flex: 120;
}
.a2 {
    flex: 101;
}
.notice {
    display: flex;
    justify-content: center;
    gap: 12px;
    height: 21px;
    margin: 1px 0 0 -1px;
    padding-right: 8px;
    line-height: 20px;
    background: #fff;
    color: #b00000;
    text-decoration: none;
}
.notice span {
    font-size: 14px;
}
.cursor {
    position: absolute;
    left: 179px;
    top: 233px;
    width: 12px;
    height: 20px;
}

/* glossy drop-down */
.sel {
    height: 19px;
    padding-left: 9px;
    border: 1px solid #bbb;
    border-bottom: 2px solid #999;
    border-radius: 4px;
    color: #222;
    font-family: "DejaVu Sans", "Noto Sans CJK JP", sans-serif;
    line-height: 16px;
    background: url("data:image/svg+xml,%3Csvg xmlns='http://www.w3.org/2000/svg' viewBox='0 0 14 18' preserveAspectRatio='none'%3E%3ClinearGradient id='g' x2='0' y2='1'%3E%3Cstop stop-color='%23555'/%3E%3Cstop offset='.6'/%3E%3C/linearGradient%3E%3Cpath d='M0 0h14v18H0z' fill='url(%23g)'/%3E%3Cpath d='M3 7h8l-4 6z' fill='%23fff'/%3E%3C/svg%3E") right / 14px 100% no-repeat border-box, linear-gradient(#fff 60%, #e4e4e4);
}
.w59 { width: 59px; }
.w64 { width: 64px; }
.w67 { width: 67px; }
.w72 { width: 72px; }
.w80 { width: 80px; }
.w84 { width: 83px; }
.w89 { width: 90px; }
.w113 { width: 115px; }
.w152 { width: 152px; }
.w160 { width: 160px; }

/* chart */
.chart {
    border-right: 2px solid #000;
    border-bottom: 2px solid #000;
}
.chart-body {
    flex: 1;
    margin-left: 2px;
    background: #fff;
}
.chart .bar {
    padding-right: 4px;
}
.chart-tools {
    display: flex;
    gap: 3px;
    padding: 5px 21px 0 20px;
    height: 26px;
}
.chart-tools button, .reset, .btn {
    border-radius: 2px;
    background: linear-gradient(#555, #111);
    color: #fff;
    font-weight: bold;
}
.chart-tools .multi {
    display: flex;
    align-items: center;
    gap: 4px;
    width: 99px;
    height: 19px;
    margin-left: auto;
    padding-left: 4px;
    background: linear-gradient(#888, #333);
    font-size: 11px;
}
.multi svg {
    width: 12px;
    height: 12px;
}
.ct {
    width: 19px;
    height: 19px;
}
.plot {
    width: 100%;
}
.grid {
    stroke: #e9e9e9;
    fill: none;
}
.tick {
    fill: none;
    stroke: #3fd83f;
    stroke-width: 3;
}
.axis text {
    font: 11px "DejaVu Sans", sans-serif;
    fill: #444;
}
.mid text {
    text-anchor: middle;
}
.range {
    display: flex;
    gap: 4px;
    padding: 4px 6px 0 0;
}
.range-svg {
    flex: 1;
    min-width: 0;
}
.reset {
    width: 46px;
    height: 17px;
    margin-top: 3px;
    line-height: 16px;
}

/* lower panels */
.box {
    flex: none;
    height: 161px;
    margin: 0 2px 0 3px;
    border-bottom: 2px solid #000;
    background: #fff;
    overflow: hidden;
}
.line {
    display: flex;
    align-items: center;
    border-bottom: 2px solid #e2e2e2;
    height: 35px;
    color: #333;
}
.line.l1, .line.l4 {
    height: 35px;
    gap: 6px;
    padding: 0 9px 0 1px;
}
.push {
    margin-left: auto;
}
.note {
    margin-right: 5px;
}
.btn {
    height: 23px;
    padding: 0 8px;
    font-family: "DejaVu Sans", "Noto Sans CJK JP", sans-serif;
}
.l1 .btn {
    padding: 0 9px;
}
.l2 {
    gap: 12px;
    padding-left: 1px;
}
.f {
    display: flex;
    align-items: center;
    gap: 8px;
}
.l3 {
    gap: 7px;
    padding-left: 1px;
}
.l3 label {
    display: flex;
    align-items: center;
    gap: 8px;
    margin: 0 2px 0 1px;
}
.date {
    width: 95px;
    height: 24px;
    margin: 0 -5px 0 3px;
    padding-left: 5px;
    border: 2px solid #999;
    font-family: "DejaVu Sans", sans-serif;
}
.cal {
    width: 14px;
    height: 16px;
}
.tilde {
    width: 12px;
    margin-left: 4px;
    text-align: center;
}
.tbl {
    width: 100%;
    table-layout: fixed;
    border-collapse: collapse;
}
.tbl th {
    height: 25px;
    padding: 0;
    background: linear-gradient(#555, #333);
    color: #fff;
    border-left: 1px solid #ddd;
    white-space: nowrap;
    font-family: "DejaVu Sans", "Noto Sans CJK JP", sans-serif;
    font-feature-settings: normal;
    font-size: 12px;
}
.tbl th:first-child {
    border-left: none;
}
.tbl td {
    height: 25px;
    border: 1px solid #000;
}
.t-hist col:nth-child(1) { width: 129px; }
.t-hist col:nth-child(2) { width: 85px; }
.t-hist col:nth-child(3) { width: 57px; }
.t-hist col:nth-child(4) { width: 74px; }
.t-hist col:nth-child(5) { width: 79px; }
.t-hist col:nth-child(6) { width: 96px; }
.t-hist col:nth-child(7) { width: 79px; }
.t-hist col:nth-child(8) { width: 91px; }
.t-hist col:nth-child(9) { width: 154px; }
.t-hist col:nth-child(10) { width: 169px; }
.t-hist col:nth-child(11) { width: 186px; }
.t-pos col:nth-child(1) { width: 79px; }
.t-pos col:nth-child(2) { width: 115px; }
.t-pos col:nth-child(3) { width: 80px; }
.t-pos col:nth-child(4) { width: 100px; }
.t-pos col:nth-child(5) { width: 70px; }
.t-pos col:nth-child(6) { width: 75px; }
.t-pos col:nth-child(7) { width: 70px; }
.t-pos col:nth-child(8) { width: 65px; }
.t-pos col:nth-child(9) { width: 132px; }
.t-pos col:nth-child(10) { width: 115px; }
.t-pos col:nth-child(11) { width: 105px; }
.t-pos col:nth-child(12) { width: 165px; }
.pos-body {
    height: 162px;
    padding-top: 1px;
}
.warn {
    display: inline-block;
    width: 15px;
    height: 14px;
    margin-left: 6px;
    vertical-align: middle;
}
.deposit {
    flex: 1;
    min-height: 0;
}
.dep-body {
    flex: 1;
    height: auto;
    min-height: 0;
    display: grid;
    grid-template-columns: minmax(0, 1fr) 17px;
    grid-template-rows: minmax(0, 1fr) 16px;
}
.dep-text {
    overflow: hidden;
    padding: 2px 0 0 1px;
    white-space: nowrap;
    color: #111;
}
.p2 {
    margin-top: 20px;
}
.p3 {
    margin-top: 16px;
}
.banks {
    display: grid;
    grid-template-columns: 184px 391px 1fr;
    margin-top: 2px;
}
.bank-lab {
    text-align: right;
}
.bank-list {
    display: flex;
    flex-direction: column;
    gap: 9px;
    padding-left: 8px;
}
.bank-list label {
    display: flex;
    align-items: center;
    gap: 7px;
}
.bank-note {
    display: flex;
    flex-direction: column;
    gap: 17px;
    padding-top: 16px;
}
.vs, .hs {
    display: flex;
    color: #fff;
    font-size: 8px;
}
.vs {
    flex-direction: column;
    background: linear-gradient(90deg, #333, #666);
}
.hs {
    background: linear-gradient(#777, #555);
    align-items: center;
}
.sb {
    width: 17px;
    height: 16px;
    line-height: 14px;
    text-align: center;
    border: 1px solid #333;
    background: #666;
}
.hs .end {
    margin-left: auto;
}
.vs .end {
    margin-top: auto;
}
.thumb {
    height: 48px;
    border: 1px solid #333;
    background: linear-gradient(#999, #999) center / 5px 8px no-repeat, linear-gradient(90deg, #777, #555);
}
.grip {
    width: 10px;
    height: 6px;
    margin-left: 600px;
    background: #444;
}

/* status bar */
.status {
    flex: none;
    display: flex;
    gap: 3px;
    height: 20px;
    margin-top: 3px;
    line-height: 18px;
    color: #222;
}
.status span {
    display: flex;
    align-items: center;
    border: 1px solid;
    border-color: #888 #fff #fff #888;
}
.status .msg {
    flex: 1;
}
.status .c {
    width: 21px;
}
.status svg {
    width: 16px;
    height: 16px;
    margin: 0 4px 0 2px;
}
.status .zone {
    width: 175px;
}
.status .prot {
    width: 32px;
}
.status .zoom {
    width: 84px;
    justify-content: space-between;
    padding-right: 10px;
}
.status i {
    font-style: normal;
}
```
